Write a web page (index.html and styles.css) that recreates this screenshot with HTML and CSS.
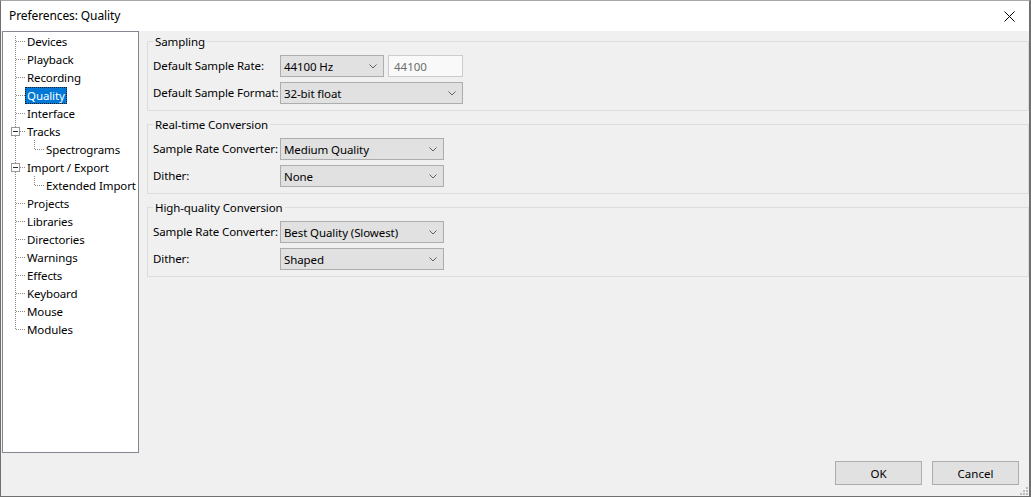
FILE: index.html
```html
<!DOCTYPE html>
<html lang="en">
<head>
<meta charset="UTF-8" />
<title>Preferences: Quality</title>
<link rel="stylesheet" href="styles.css">
</head>
<body>
<div class="window" role="dialog" aria-label="Preferences: Quality">
  <header class="titlebar">
    <span class="title">Preferences: Quality</span>
    <button class="close" aria-label="Close">
      <svg width="11" height="11" viewBox="0 0 11 11"><path d="M0.5 0.5 L10.5 10.5 M10.5 0.5 L0.5 10.5" stroke="#000" stroke-width="1" fill="none"/></svg>
    </button>
  </header>

  <div class="main">
    <ul class="tree" role="tree">
      <li class="node"><span class="branch first"></span><span class="label">Devices</span></li>
      <li class="node"><span class="branch"></span><span class="label">Playback</span></li>
      <li class="node"><span class="branch"></span><span class="label">Recording</span></li>
      <li class="node"><span class="branch"></span><span class="label selected">Quality</span></li>
      <li class="node"><span class="branch"></span><span class="label">Interface</span></li>
      <li class="node"><span class="branch"><span class="expander"></span></span><span class="label">Tracks</span></li>
      <li class="node"><span class="branch child"></span><span class="label">Spectrograms</span></li>
      <li class="node"><span class="branch"><span class="expander"></span></span><span class="label">Import / Export</span></li>
      <li class="node"><span class="branch child"></span><span class="label">Extended Import</span></li>
      <li class="node"><span class="branch"></span><span class="label">Projects</span></li>
      <li class="node"><span class="branch"></span><span class="label">Libraries</span></li>
      <li class="node"><span class="branch"></span><span class="label">Directories</span></li>
      <li class="node"><span class="branch"></span><span class="label">Warnings</span></li>
      <li class="node"><span class="branch"></span><span class="label">Effects</span></li>
      <li class="node"><span class="branch"></span><span class="label">Keyboard</span></li>
      <li class="node"><span class="branch"></span><span class="label">Mouse</span></li>
      <li class="node"><span class="branch last"></span><span class="label">Modules</span></li>
    </ul>

    <div class="pane">
      <fieldset class="group">
        <legend>Sampling</legend>
        <div class="rows">
          <span class="caption">Default Sample Rate:</span>
          <div class="controls">
            <div class="combo w-rate"><span>44100 Hz</span><svg class="chev" width="8" height="5" viewBox="0 0 8 5"><path d="M0.5 0.5 L4 4 L7.5 0.5" stroke="#606060" fill="none"/></svg></div>
            <input class="field" type="text" value="44100" disabled>
          </div>
          <span class="caption">Default Sample Format:</span>
          <div class="combo w-format"><span>32-bit float</span><svg class="chev" width="8" height="5" viewBox="0 0 8 5"><path d="M0.5 0.5 L4 4 L7.5 0.5" stroke="#606060" fill="none"/></svg></div>
        </div>
      </fieldset>

      <fieldset class="group">
        <legend>Real-time Conversion</legend>
        <div class="rows">
          <span class="caption">Sample Rate Converter:</span>
          <div class="combo w-conv"><span>Medium Quality</span><svg class="chev" width="8" height="5" viewBox="0 0 8 5"><path d="M0.5 0.5 L4 4 L7.5 0.5" stroke="#606060" fill="none"/></svg></div>
          <span class="caption">Dither:</span>
          <div class="combo w-conv"><span>None</span><svg class="chev" width="8" height="5" viewBox="0 0 8 5"><path d="M0.5 0.5 L4 4 L7.5 0.5" stroke="#606060" fill="none"/></svg></div>
        </div>
      </fieldset>

      <fieldset class="group">
        <legend>High-quality Conversion</legend>
        <div class="rows">
          <span class="caption">Sample Rate Converter:</span>
          <div class="combo w-conv"><span>Best Quality (Slowest)</span><svg class="chev" width="8" height="5" viewBox="0 0 8 5"><path d="M0.5 0.5 L4 4 L7.5 0.5" stroke="#606060" fill="none"/></svg></div>
          <span class="caption">Dither:</span>
          <div class="combo w-conv"><span>Shaped</span><svg class="chev" width="8" height="5" viewBox="0 0 8 5"><path d="M0.5 0.5 L4 4 L7.5 0.5" stroke="#606060" fill="none"/></svg></div>
        </div>
      </fieldset>
    </div>
  </div>

  <footer class="buttons">
    <button class="btn">OK</button>
    <button class="btn">Cancel</button>
    <svg class="grip" width="8" height="8" viewBox="0 0 8 8" aria-hidden="true">
      <rect x="6" y="0" width="2" height="2" fill="#bcbcbc"/>
      <rect x="3" y="3" width="2" height="2" fill="#bcbcbc"/>
      <rect x="6" y="3" width="2" height="2" fill="#bcbcbc"/>
      <rect x="0" y="6" width="2" height="2" fill="#bcbcbc"/>
      <rect x="3" y="6" width="2" height="2" fill="#bcbcbc"/>
      <rect x="6" y="6" width="2" height="2" fill="#bcbcbc"/>
    </svg>
  </footer>
</div>
</body>
</html>
```

FILE: styles.css
```css
/* Win32 style preferences dialog */
:root {
  --color-face: #f0f0f0;
  --color-text: #000000;
  --color-frame: #707070;
  --color-tree-border: #828790;
  --color-dots: #8a8a8a;
  --color-group: #dcdcdc;
  --color-control: #e1e1e1;
  --color-control-border: #adadad;
  --color-select: #0078d7;
  --font-ui: "Noto Sans", "Open Sans", sans-serif;
}

*, *::before, *::after {
  box-sizing: border-box;
}

body {
  margin: 0;
  font-family: var(--font-ui);
  font-size: 11.5px;
  letter-spacing: -0.1px;
  color: var(--color-text);
  background: #ffffff;
}

/* Window frame */
.window {
  width: 1031px;
  height: 497px;
  display: flex;
  flex-direction: column;
  background: var(--color-face);
  border: 1px solid var(--color-frame);
  border-top-color: #a8a8a8;
  border-right-width: 2px;
}

.titlebar {
  height: 30px;
  flex: 0 0 auto;
  display: flex;
  align-items: center;
  justify-content: space-between;
  background: #ffffff;
  padding-left: 8px;
}
.title {
  font-size: 12px;
  line-height: 16px;
}
.close {
  width: 46px;
  height: 30px;
  border: none;
  background: transparent;
  padding: 0;
  display: flex;
  align-items: center;
  justify-content: center;
  margin-right: -3px;
}

/* Body: tree + pane */
.main {
  display: flex;
  height: 422px;
  padding-left: 1px;
}

.tree {
  list-style: none;
  margin: 0;
  width: 137px;
  height: 422px;
  flex: 0 0 auto;
  padding: 0 0 0 7px;
  background: #ffffff;
  border: 1px solid var(--color-tree-border);
}

.node {
  display: flex;
  align-items: center;
  height: 18px;
  white-space: nowrap;
}

/* Dotted connector lines */
.branch {
  flex: 0 0 auto;
  width: 15px;
  height: 18px;
  padding: 5px 0 0 1px;
  background-image:
    repeating-linear-gradient(to bottom, var(--color-dots) 0 1px, transparent 1px 2px),
    repeating-linear-gradient(to right, var(--color-dots) 0 1px, transparent 1px 2px);
  background-size: 1px 18px, 9px 1px;
  background-position: 5px 0, 6px 9px;
  background-repeat: no-repeat;
}
.branch.first {
  background-size: 1px 14px, 9px 1px;
  background-position: 5px 4px, 6px 9px;
}
.branch.last {
  background-size: 1px 10px, 9px 1px;
}
.branch.child {
  width: 34px;
  background-image:
    repeating-linear-gradient(to bottom, var(--color-dots) 0 1px, transparent 1px 2px),
    repeating-linear-gradient(to bottom, var(--color-dots) 0 1px, transparent 1px 2px),
    repeating-linear-gradient(to right, var(--color-dots) 0 1px, transparent 1px 2px);
  background-size: 1px 18px, 1px 10px, 9px 1px;
  background-position: 5px 0, 24px 0, 25px 9px;
}

.expander {
  display: block;
  width: 9px;
  height: 9px;
  border: 1px solid #969696;
  background: linear-gradient(#2b2b2b, #2b2b2b) no-repeat 1px 3px / 5px 1px, #ffffff;
}

.label {
  padding: 0 1px;
  line-height: 15px;
  border: 1px solid transparent;
}
.label.selected {
  background: var(--color-select);
  color: #ffffff;
  border: 1px dotted #1a1a1a;
}

/* Right pane with group boxes */
.pane {
  flex: 1 1 auto;
  padding: 3px 0 0 8px;
  display: flex;
  flex-direction: column;
  gap: 6px;
}

.group {
  margin: 0;
  min-width: 0;
  padding: 6px 5px 6px;
  border: 1px solid var(--color-group);
}
.group legend {
  padding: 0 2px;
  line-height: 15px;
}

.rows {
  display: grid;
  grid-template-columns: 127px auto;
  justify-content: start;
  align-items: center;
  row-gap: 5px;
}
.caption {
  line-height: 16px;
  white-space: nowrap;
}

.controls {
  display: flex;
  gap: 4px;
}

.combo {
  height: 22px;
  display: flex;
  align-items: center;
  justify-content: space-between;
  padding: 0 6px 0 3px;
  background: var(--color-control);
  border: 1px solid var(--color-control-border);
  white-space: nowrap;
}
.combo .chev {
  flex: 0 0 auto;
}
.w-rate { width: 104px; }
.w-format { width: 183px; }
.w-conv { width: 164px; }

.field {
  width: 75px;
  height: 22px;
  margin: 0;
  padding: 0 5px;
  font: inherit;
  color: #6d6d6d;
  background: #f9f9f9;
  border: 1px solid #cccccc;
}

/* Dialog buttons */
.buttons {
  flex: 1 1 auto;
  display: flex;
  justify-content: flex-end;
  align-items: flex-start;
  gap: 10px;
  padding: 8px 10px 0 0;
  position: relative;
}
.btn {
  width: 87px;
  height: 24px;
  margin: 0;
  padding: 0;
  font: inherit;
  color: var(--color-text);
  background: var(--color-control);
  border: 1px solid var(--color-control-border);
}
.grip {
  position: absolute;
  right: 1px;
  bottom: 1px;
}
```
